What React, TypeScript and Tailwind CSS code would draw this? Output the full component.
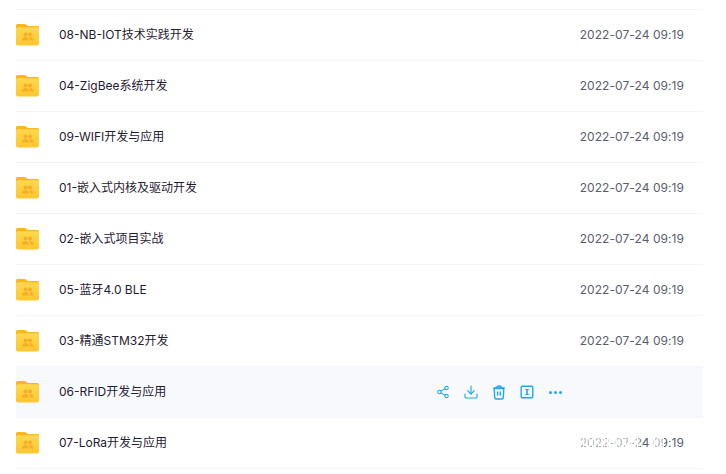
import { Download, Share2 } from "lucide-react";

const files = [
  "08-NB-IOT技术实践开发",
  "04-ZigBee系统开发",
  "09-WIFI开发与应用",
  "01-嵌入式内核及驱动开发",
  "02-嵌入式项目实战",
  "05-蓝牙4.0 BLE",
  "03-精通STM32开发",
  "06-RFID开发与应用",
  "07-LoRa开发与应用",
];

function FolderIcon() {
  return (
    <svg width="24" height="22" viewBox="0 0 24 22" className="shrink-0">
      <defs>
        <linearGradient id="body" x1="0" y1="0" x2="0" y2="1">
          <stop offset="0" stopColor="#ffd84f" />
          <stop offset="1" stopColor="#ffc62e" />
        </linearGradient>
      </defs>
      <path d="M0 1.500C0 .7.700 0 1.500 0h7c.5 0 .9.200 1.300.500L12 2h9.500C22.400 2 23 2.700 23 3.500V7H0z" fill="#ffb61c" />
      <path d="M0 5c0-1 .8-1.800 1.800-1.800h19.400c1 0 1.800.8 1.800 1.800v14.500c0 1-.8 2-1.800 2H1.800c-1 0-1.800-1-1.800-2z" fill="url(#body)" />
      <circle cx="9.500" cy="10.500" r="2" fill="#f5ae27" />
      <circle cx="14" cy="10.500" r="2" fill="#f5ae27" />
      <path d="M6 16.500c0-2.300 1.400-3.500 3.500-3.500s3.500 1.200 3.500 3.500z" fill="#f5ae27" />
      <path d="M13.500 13c2.400-.2 4 1.200 4 3.500h-3.300c0-1.500-.2-2.500-.7-3.500z" fill="#f5ae27" />
    </svg>
  );
}

function TrashIcon() {
  return (
    <svg width="14" height="15" viewBox="0 0 14 15" fill="none" stroke="currentColor" strokeWidth="1.400">
      <path d="M2.200 3.500h9.600l-.5 9c0 .8-.6 1.500-1.400 1.500H4.100c-.8 0-1.400-.7-1.400-1.500z" />
      <path d="M1.500 3h11M4.500 3c0-1.300 1-2 2.500-2s2.500.7 2.500 2" />
      <path d="M5.700 6.500v4M8.300 6.500v4" />
    </svg>
  );
}

function RenameIcon() {
  return (
    <svg width="14" height="14" viewBox="0 0 14 14" fill="none" stroke="currentColor" strokeWidth="1.400">
      <rect x="1.200" y="1.200" width="11.600" height="11.600" rx="1" />
      <path d="M5.200 4.500h3.600M5.200 9.500h3.600" strokeWidth="1.200" />
      <path d="M7 4.500v5" strokeWidth="1.600" />
    </svg>
  );
}

function Dots() {
  return (
    <div className="flex gap-[2px]">
      <div className="size-[3px] rounded-full bg-[#1ea7f5]" />
      <div className="size-[3px] rounded-full bg-[#1ea7f5]" />
      <div className="size-[3px] rounded-full bg-[#1ea7f5]" />
    </div>
  );
}

function Actions() {
  return (
    <div className="flex items-center text-[#1ea7f5]">
      <div className="flex w-7 justify-center">
        <Share2 size={14} strokeWidth={1.800} />
      </div>
      <div className="flex w-7 justify-center">
        <Download size={16} strokeWidth={1.700} />
      </div>
      <div className="flex w-7 justify-center">
        <TrashIcon />
      </div>
      <div className="flex w-7 justify-center">
        <RenameIcon />
      </div>
      <div className="flex w-7 justify-center">
        <Dots />
      </div>
    </div>
  );
}

export default function App() {
  return (
    <div className="h-[474px] w-[726px] overflow-hidden bg-white pl-4 pr-[23px] pt-[9px] font-['Inter','Noto_Sans_CJK_SC',sans-serif]">
      <div className="border-t border-[#f5f5f6]">
        {files.map((name, i) => (
          <div
            key={name}
            className={
              i === 7
                ? "flex h-[51px] items-center border-b border-[#f5f5f6] bg-[#f7f9fd]"
                : "flex h-[51px] items-center border-b border-[#f5f5f6]"
            }
          >
            <FolderIcon />
            <span className="ml-[19px] mb-px w-[370px] shrink-0 text-xs text-[#1f2035]">{name}</span>
            {i === 7 ? (
              <Actions />
            ) : (
              <span className="relative ml-auto mr-[19px] mb-px text-xs tracking-[0.06px] text-[#5a5d70]">
                2022-07-24 09:19
                {i === 8 && (
                  <span className="absolute inset-y-0 left-0 w-[60px] bg-[repeating-linear-gradient(90deg,#ffffff_0,#ffffff_1px,#ffffff80_1px,#ffffff80_3px)]" />
                )}
                {i === 8 && (
                  <span className="absolute inset-y-0 left-[74px] w-[10px] bg-[repeating-linear-gradient(90deg,#ffffff_0,#ffffff_1px,#ffffff80_1px,#ffffff80_3px)]" />
                )}
              </span>
            )}
          </div>
        ))}
      </div>
    </div>
  );
}
